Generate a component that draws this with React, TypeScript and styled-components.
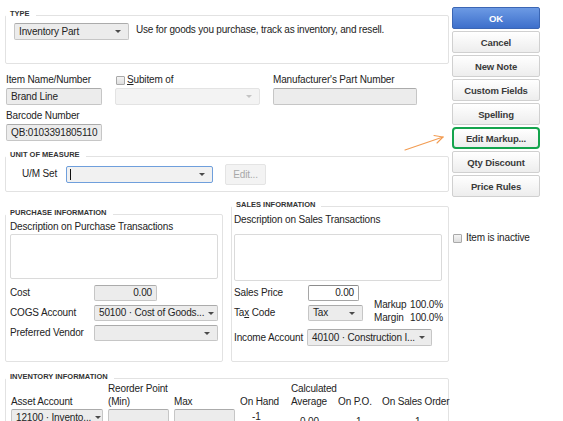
import React from "react";
import styled, { createGlobalStyle } from "styled-components";

const GlobalStyle = createGlobalStyle`
  html, body {
    margin: 0;
    padding: 0;
    background: #fff;
  }
  body {
    font-family: "Liberation Sans", Arial, sans-serif;
    font-size: 10px;
    color: #232323;
  }
  * {
    box-sizing: border-box;
  }
`;

const Page = styled.div`
  position: relative;
  width: 563px;
  height: 421px;
  overflow: hidden;
  display: flex;
  align-items: flex-start;
  gap: 3px;
  padding: 7px 0 0 5px;
  letter-spacing: -0.15px;
`;

const Form = styled.div`
  width: 444px;
  flex: none;
  display: flex;
  flex-direction: column;
  & > * {
    flex-shrink: 0;
  }
`;

const Side = styled.div`
  width: 88px;
  flex: none;
  display: flex;
  flex-direction: column;
  gap: 2px;
`;

const Section = styled.div<{ $top?: number }>`
  display: flex;
  flex-direction: column;
  margin-top: ${(p) => p.$top ?? 0}px;
`;

const SectionTitle = styled.div`
  align-self: flex-start;
  position: relative;
  z-index: 1;
  margin-left: 1px;
  margin-bottom: -3px;
  padding: 0 6px 0 4px;
  background: #fff;
  font-size: 7.5px;
  font-weight: bold;
  line-height: 9px;
  letter-spacing: 0;
  color: #333;
`;

const Box = styled.div<{ $h?: number }>`
  border: 1px solid #e2e2e2;
  border-radius: 2px;
  ${(p) => (p.$h ? `height: ${p.$h}px;` : "flex: 1;")}
`;

const TypeBox = styled(Box)`
  display: flex;
  align-items: flex-start;
  gap: 7px;
  padding: 7px 8px;
`;

const TypeHint = styled.div`
  line-height: 12px;
  margin-top: 1px;
  letter-spacing: -0.2px;
`;

const Label = styled.div`
  line-height: 12px;
  white-space: nowrap;
`;

const Field = styled.div`
  display: flex;
  flex-direction: column;
  gap: 2px;
`;

const IdGrid = styled.div`
  display: grid;
  grid-template-columns: 96px 145px 144px;
  column-gap: 13px;
  row-gap: 5px;
  margin-top: 10px;
  padding-left: 1px;
`;

const CheckLabel = styled.div`
  display: flex;
  align-items: center;
  gap: 2px;
  line-height: 12px;
  margin-left: 1px;
`;

const Check = styled.span`
  width: 9px;
  height: 9px;
  border: 1px solid #a9a9a9;
  border-radius: 1px;
  background: linear-gradient(#f4f4f4, #dedede);
  flex: none;
`;

const TextBox = styled.div<{ $w?: number; $h?: number; $white?: boolean; $right?: boolean }>`
  width: ${(p) => (p.$w ? `${p.$w}px` : "100%")};
  height: ${(p) => p.$h ?? 17}px;
  border: 1px solid ${(p) => (p.$white ? "#a6a6a6" : "#c6c6c6")};
  border-top-color: ${(p) => (p.$white ? "#8c8c8c" : "#ababab")};
  border-radius: 2px;
  background: ${(p) => (p.$white ? "#fff" : "#ececec")};
  display: flex;
  align-items: center;
  justify-content: ${(p) => (p.$right ? "flex-end" : "flex-start")};
  padding: 0 4px;
  line-height: 12px;
  white-space: nowrap;
  overflow: hidden;
`;

const Select = styled.div<{ $w?: number; $h?: number; $disabled?: boolean; $focus?: boolean }>`
  width: ${(p) => (p.$w ? `${p.$w}px` : "100%")};
  height: ${(p) => p.$h ?? 17}px;
  border: 1px solid ${(p) => (p.$focus ? "#6f9fdc" : p.$disabled ? "#e3e3e3" : "#c6c6c6")};
  border-top-color: ${(p) => (p.$focus ? "#6f9fdc" : p.$disabled ? "#e3e3e3" : "#ababab")};
  border-radius: 2px;
  background: ${(p) => (p.$disabled ? "#f3f3f3" : p.$focus ? "#f1f1f1" : "#ececec")};
  display: flex;
  align-items: center;
  justify-content: space-between;
  padding: 0 7px 0 4px;
  line-height: 12px;
  white-space: nowrap;
  overflow: hidden;
`;

const Arrow = styled.span<{ $light?: boolean }>`
  flex: none;
  width: 0;
  height: 0;
  border-left: 3px solid transparent;
  border-right: 3px solid transparent;
  border-top: 3px solid ${(p) => (p.$light ? "#c4c4c4" : "#4a4a4a")};
  margin-left: 4px;
`;

const Caret = styled.span`
  width: 1px;
  height: 11px;
  background: #111;
  margin-left: -1px;
`;

const UomBox = styled(Box)`
  display: flex;
  align-items: center;
  padding-left: 16px;
`;

const GhostButton = styled.div`
  width: 41px;
  height: 21px;
  margin-left: 12px;
  border: 1px solid #e4e4e4;
  border-radius: 2px;
  background: #f3f3f3;
  color: #a8a8a8;
  display: flex;
  align-items: center;
  justify-content: center;
`;

const Split = styled.div`
  display: flex;
  gap: 8px;
  height: 162px;
  margin-top: 8px;
`;

const Half = styled(Section)`
  width: 218px;
`;

const PurchaseBox = styled(Box)`
  padding: 6px 4px 0 4px;
`;

const SalesBox = styled(Box)`
  padding: 7px 6px 0 2px;
`;

const Memo = styled.div<{ $h: number; $top: number }>`
  height: ${(p) => p.$h}px;
  margin-top: ${(p) => p.$top}px;
  border: 1px solid #dadada;
  border-radius: 2px;
  background: #fff;
`;

const FormGrid = styled.div<{ $cols: string; $top: number }>`
  display: grid;
  grid-template-columns: ${(p) => p.$cols};
  grid-auto-rows: 16px;
  row-gap: 4px;
  align-items: center;
  margin-top: ${(p) => p.$top}px;
`;

const Ratio = styled.div`
  grid-column: 3;
  grid-row: 1 / span 2;
  align-self: end;
  margin-bottom: -3px;
  padding-left: 11px;
  display: grid;
  grid-template-columns: 36px auto;
  line-height: 13px;
`;

const IncomeRow = styled.div`
  display: flex;
  align-items: center;
  margin-top: 8px;
`;

const RowLabel = styled(Label)`
  width: 73px;
`;

const InvBox = styled(Box)`
  height: 80px;
  padding: 3px 0 0 5px;
`;

const InvGrid = styled.div`
  display: grid;
  grid-template-columns: 92px 61px 61px 46px 42px 39px 66px;
  column-gap: 5px;
  row-gap: 1px;
`;

const Head = styled.div`
  align-self: end;
  line-height: 13px;
  white-space: nowrap;
`;

const Value = styled.div<{ $top: number; $indent: number }>`
  line-height: 13px;
  margin-top: ${(p) => p.$top}px;
  padding-left: ${(p) => p.$indent}px;
`;

const Button = styled.div<{ $primary?: boolean; $highlight?: boolean }>`
  height: 22px;
  display: flex;
  align-items: center;
  justify-content: center;
  border: ${(p) => (p.$highlight ? "2px solid #14a44d" : p.$primary ? "1px solid #3b66b4" : "1px solid #d0d0d0")};
  border-radius: ${(p) => (p.$highlight ? 4 : 2)}px;
  background: ${(p) =>
    p.$primary ? "linear-gradient(#6c9ae4, #3d6fcb)" : "linear-gradient(#ffffff, #ededed)"};
  color: ${(p) => (p.$primary ? "#fff" : "#3a3a3a")};
  font-size: 9.5px;
  font-weight: bold;
  white-space: nowrap;
`;

const Inactive = styled.div`
  display: flex;
  align-items: center;
  gap: 4px;
  margin: 33px 0 0 1px;
  line-height: 12px;
`;

const Overlay = styled.svg`
  position: absolute;
  left: 0;
  top: 0;
  pointer-events: none;
`;

const buttons = ["Cancel", "New Note", "Custom Fields", "Spelling", "Edit Markup...", "Qty Discount", "Price Rules"];

export default function App() {
  return (
    <>
      <GlobalStyle />
      <Page>
        <Form>
          <Section $top={2}>
            <SectionTitle>TYPE</SectionTitle>
            <TypeBox $h={49}>
              <Select $w={115}>
                Inventory Part
                <Arrow />
              </Select>
              <TypeHint>Use for goods you purchase, track as inventory, and resell.</TypeHint>
            </TypeBox>
          </Section>

          <IdGrid>
            <Field>
              <Label>Item Name/Number</Label>
              <TextBox>Brand Line</TextBox>
            </Field>
            <Field>
              <CheckLabel>
                <Check />
                <span>
                  <u>S</u>ubitem of
                </span>
              </CheckLabel>
              <Select $disabled>
                <span />
                <Arrow $light />
              </Select>
            </Field>
            <Field>
              <Label>Manufacturer's Part Number</Label>
              <TextBox />
            </Field>
            <Field>
              <Label>Barcode Number</Label>
              <TextBox>QB:0103391805110</TextBox>
            </Field>
          </IdGrid>

          <Section $top={9}>
            <SectionTitle>UNIT OF MEASURE</SectionTitle>
            <UomBox $h={36}>
              <Label>U/M Set</Label>
              <Select $w={147} $focus style={{ marginLeft: 9 }}>
                <Caret />
                <Arrow />
              </Select>
              <GhostButton>Edit...</GhostButton>
            </UomBox>
          </Section>

          <Split>
            <Half $top={8}>
              <SectionTitle>PURCHASE INFORMATION</SectionTitle>
              <PurchaseBox>
                <Label>Description on Purchase Transactions</Label>
                <Memo $h={45} $top={1} />
                <FormGrid $cols="84px 1fr" $top={6}>
                  <Label>Cost</Label>
                  <TextBox $w={63} $h={16} $right>
                    0.00
                  </TextBox>
                  <Label>COGS Account</Label>
                  <Select $h={16}>
                    50100 · Cost of Goods...
                    <Arrow />
                  </Select>
                  <Label>Preferred Vendor</Label>
                  <Select $h={16}>
                    <span />
                    <Arrow />
                  </Select>
                </FormGrid>
              </PurchaseBox>
            </Half>

            <Half>
              <SectionTitle>SALES INFORMATION</SectionTitle>
              <SalesBox>
                <Label>Description on Sales Transactions</Label>
                <Memo $h={47} $top={8} />
                <FormGrid $cols="74px 55px 1fr" $top={4}>
                  <Label>Sales Price</Label>
                  <TextBox $w={51} $h={16} $white $right>
                    0.00
                  </TextBox>
                  <Ratio>
                    <span>Markup</span>
                    <span>100.0%</span>
                    <span>Margin</span>
                    <span>100.0%</span>
                  </Ratio>
                  <Label>
                    Ta<u>x</u> Code
                  </Label>
                  <Select $h={16}>
                    Tax
                    <Arrow />
                  </Select>
                </FormGrid>
                <IncomeRow>
                  <RowLabel>Income Account</RowLabel>
                  <Select $w={125}>
                    40100 · Construction I...
                    <Arrow />
                  </Select>
                </IncomeRow>
              </SalesBox>
            </Half>
          </Split>

          <Section $top={10}>
            <SectionTitle>INVENTORY INFORMATION</SectionTitle>
            <InvBox>
              <InvGrid>
                <Head>Asset Account</Head>
                <Head>
                  Reorder Point
                  <br />
                  (Min)
                </Head>
                <Head>Max</Head>
                <Head>On Hand</Head>
                <Head>
                  Calculated
                  <br />
                  Average
                </Head>
                <Head>On P.O.</Head>
                <Head>On Sales Order</Head>
                <Select>
                  12100 · Invento...
                  <Arrow />
                </Select>
                <TextBox />
                <TextBox />
                <Value $top={1} $indent={12}>
                  -1
                </Value>
                <Value $top={6} $indent={9}>
                  0.00
                </Value>
                <Value $top={6} $indent={18}>
                  1
                </Value>
                <Value $top={6} $indent={33}>
                  1
                </Value>
              </InvGrid>
            </InvBox>
          </Section>
        </Form>

        <Side>
          <Button $primary>OK</Button>
          {buttons.map((b) => (
            <Button key={b} $highlight={b === "Edit Markup..."}>
              {b}
            </Button>
          ))}
          <Inactive>
            <Check />
            <span>Item is inactive</span>
          </Inactive>
        </Side>

        <Overlay width="563" height="421" viewBox="0 0 563 421">
          <g stroke="#f29c52" strokeWidth="1.1" fill="none" strokeLinecap="round">
            <path d="M405 150 L443 137" />
            <path d="M434 135.5 L443 137 L437 143" />
          </g>
        </Overlay>
      </Page>
    </>
  );
}
